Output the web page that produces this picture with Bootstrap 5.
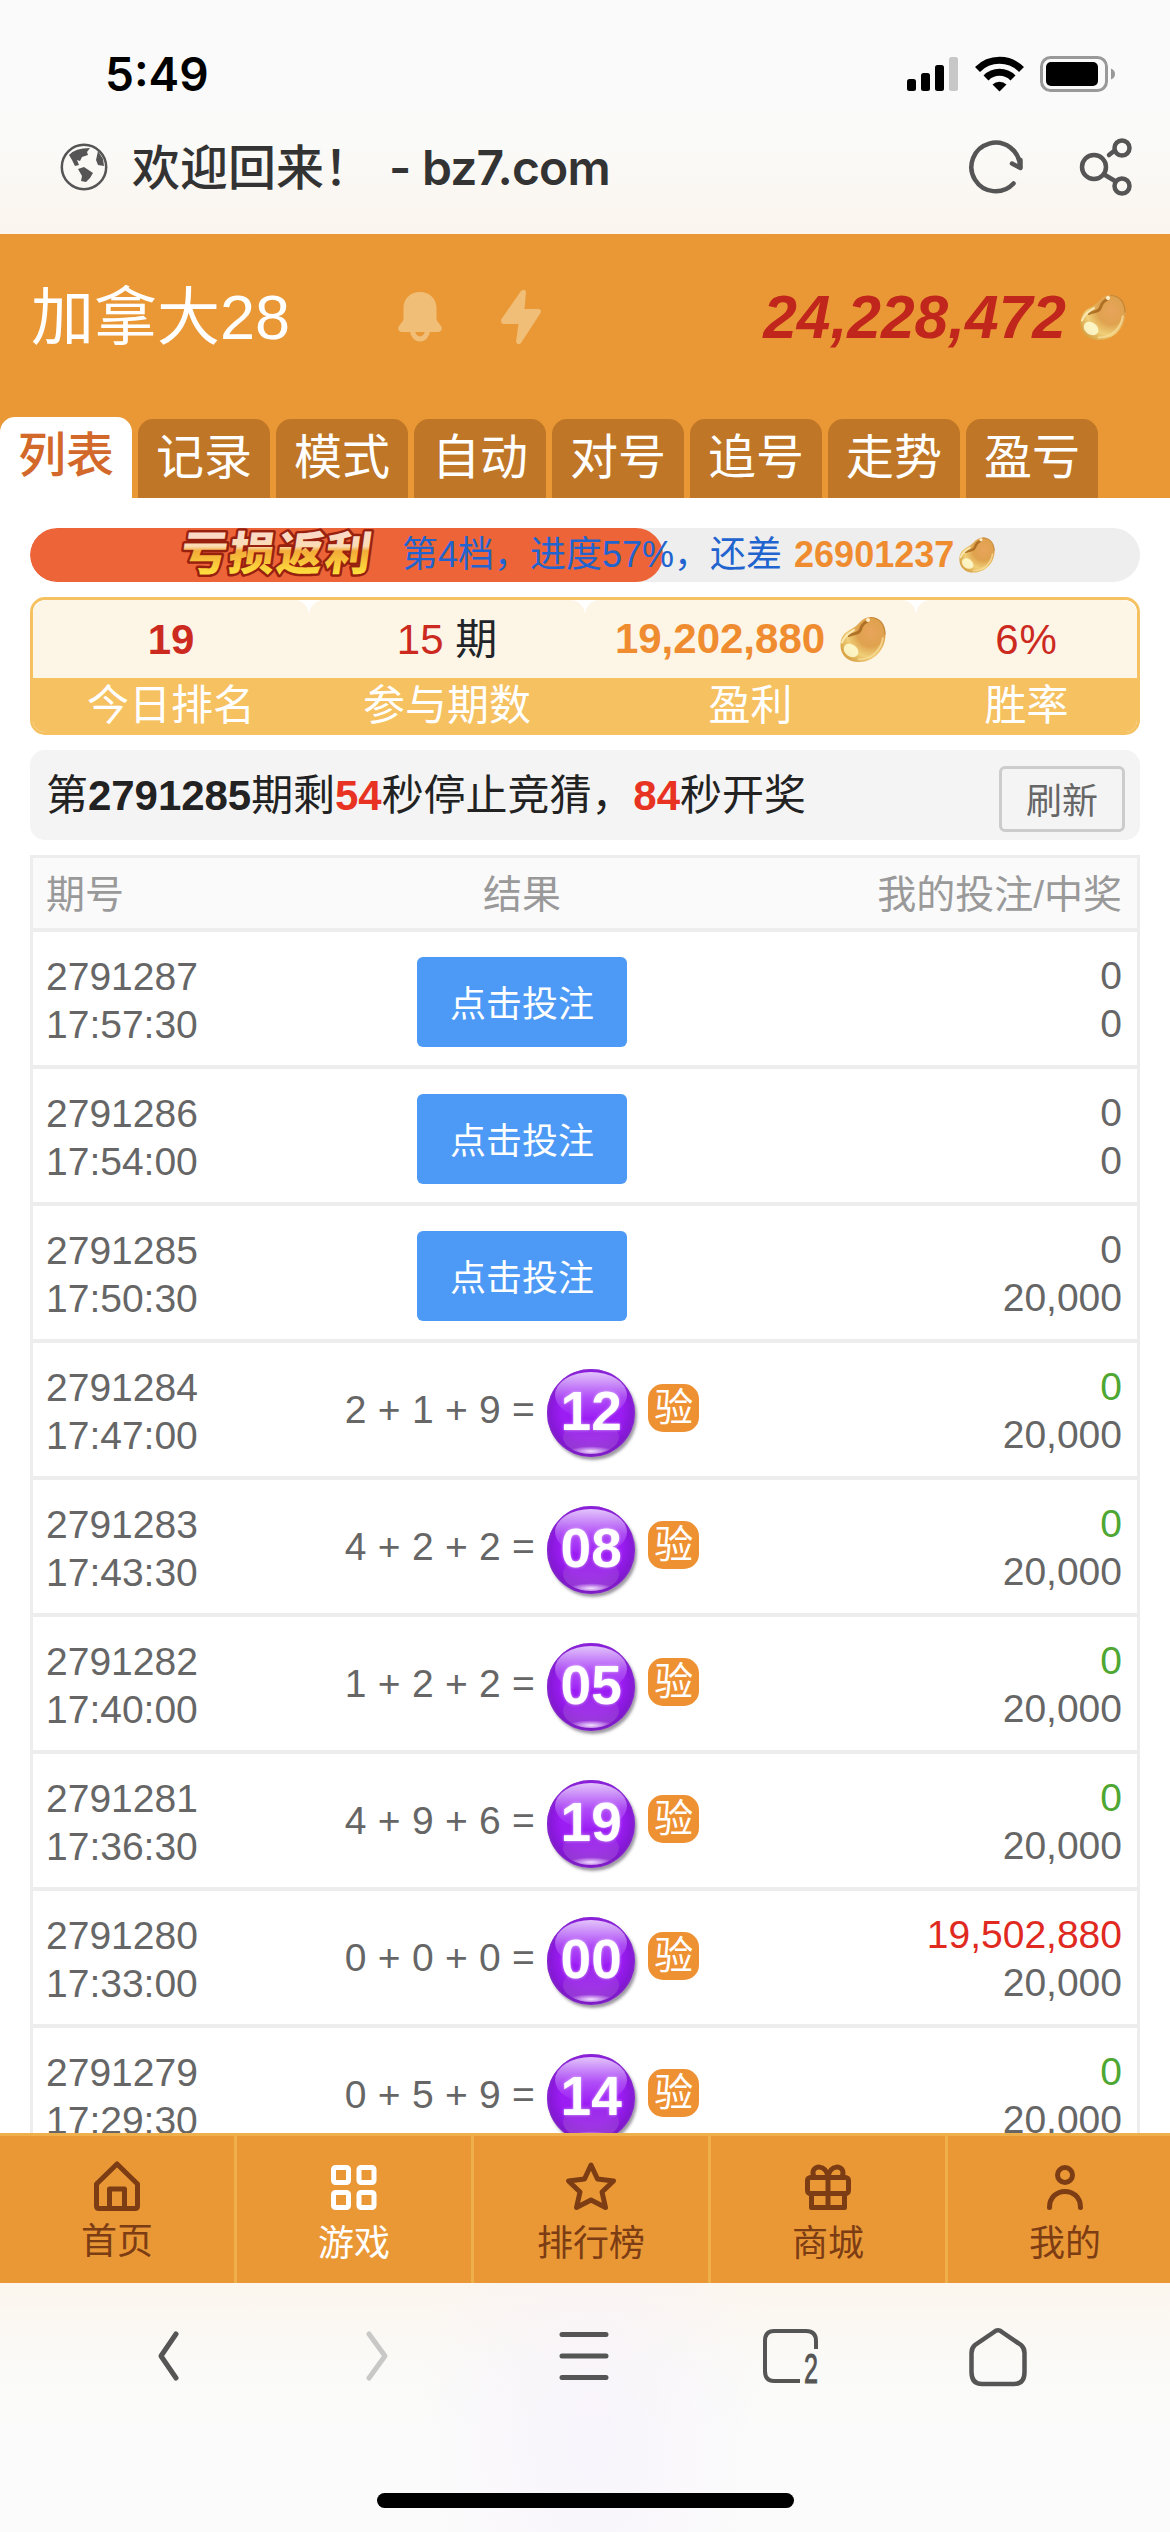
<!DOCTYPE html>
<html lang="zh-CN">
<head>
<meta charset="utf-8">
<meta name="viewport" content="width=device-width, initial-scale=1">
<title>加拿大28</title>
<link href="https://cdn.jsdelivr.net/npm/bootstrap@5.3.0/dist/css/bootstrap.min.css" rel="stylesheet">
<style>
  html, body { height: 2532px; }
  body { width: 1170px; overflow: hidden; background: #fff; color: #222; font-family: "Liberation Sans", "Noto Sans CJK SC", sans-serif; font-size: 39px; line-height: 48px; }
  svg { display: block; flex: none; }
  .ui-font { font-family: Inter, "Noto Sans CJK SC", sans-serif; }
  .browser-top { height: 234px; background: linear-gradient(#fafafa 0 45%, #fafaf8 62%, #fbf5ee); }
  .status-bar { height: 100px; padding: 48px 54px 0 105px; }
  .clock { font-size: 46px; font-weight: 600; line-height: 52px; color: #000; }
  .status-icons { gap: 16px; height: 51px; }
  .address { height: 134px; padding: 0 37px 0 60px; color: #333; }
  .address-title { font-size: 48px; font-weight: 500; white-space: pre; line-height: 60px; margin-left: 24px; padding-top: 2px; }
  .address-host { font-weight: 600; letter-spacing: -.8px; margin-left: -7px; }
  .site-head { height: 264px; background: #ea9835; }
  .head-line { height: 183px; padding: 0 44px 17px 31px; }
  .game-title { font-size: 63px; line-height: 70px; color: #fff; width: 367px; }
  .balance { font-size: 60.5px; line-height: 70px; font-weight: 700; font-style: italic; color: #c0261b; }
  .tabs { gap: 6px; height: 81px; }
  .tab-item { width: 132px; height: 79px; border-radius: 15px 15px 0 0; background: #bf7727; color: #fff; font-size: 48px; line-height: 77px; text-align: center; flex: none; }
  .tab-item.active { height: 81px; background: #fff; color: #d2692a; font-weight: 500; }
  .page-main { padding: 30px 30px 0; height: 1635px; overflow: hidden; }
  .rebate { height: 54px; border-radius: 27px; background: #eee; position: relative; overflow: hidden; }
  .rebate-fill { height: 54px; border-radius: 27px; background: #ec6438; }
  .rebate-text { position: absolute; inset: 0; font-size: 36px; line-height: 56px; color: #2264cf; padding-left: 144px; }
  .rebate-text b { color: #f08c30; margin: 0 5px 0 12px; }
  .stat-box { margin-top: 15px; height: 138px; border: 3px solid #f6c161; border-radius: 15px; font-size: 42px; overflow: hidden; }
  .stat-cell { flex: none; }
  .stat-num { height: 78px; line-height: 80px; background: #fdf5e6; border-radius: 15px 15px 0 0; color: #cc2a1f; }
  .stat-name { height: 54px; line-height: 55px; background: #f6c161; color: #fff; text-align: center; }
  .rate { letter-spacing: 1px; }
  .notice { margin-top: 15px; height: 90px; border-radius: 15px; background: #f4f4f4; font-size: 42px; padding: 0 15px 0 16px; line-height: 90px; letter-spacing: -.05px; }
  .notice-text { padding-top: 2px; }
  .notice i { color: #e83323; font-weight: 700; font-style: normal; }
  .refresh { width: 126px; height: 66px; border: 3px solid #ccc; border-radius: 6px; font-size: 36px; line-height: 66px; color: #666; text-align: center; margin-top: 8px; background: none; padding: 0; }
  .draws { margin-top: 15px; border: 3px solid #ededed; color: #666; }
  .draw-head { height: 74px; border-bottom: 4px solid #ededed; background: #fafafa; color: #999; line-height: 73px; }
  .draw-row { height: 137px; border-bottom: 4px solid #ededed; padding-top: 19px; }
  .c-issue { width: 300px; padding-left: 13px; }
  .c-result { width: 378px; }
  .c-bet { width: 426px; padding-right: 15px; text-align: right; }
  .draw-row .c-issue { padding-top: 2px; }
  .draw-row .c-bet { padding-top: 1px; }
  .btn-bet { width: 210px; height: 90px; margin-top: 6px; border-radius: 6px; background: #4c9af6; color: #fff; font-size: 36px; line-height: 84px; padding: 6px 0 0; border: 0; }
  .result-line { padding-top: 6px; }
  .sum-text { white-space: pre; margin-top: 18px; letter-spacing: .25px; }
  .ball { width: 88px; height: 88px; margin: 1px 13px 0 1px; border-radius: 50%; color: #fff; font-size: 55px; font-weight: 700; line-height: 85px; text-align: center; position: relative; z-index: 0; background: radial-gradient(circle at 50% 46%, #9c1cf4 0 46%, #8418d4 66%, #7412b8 72%); box-shadow: inset 0 0 3px 1px #8a2fd0, 2px 3px 3px rgba(60,50,70,.5); text-shadow: 0 0 3px rgba(255,255,255,.6); }
  .ball::before { content: ""; position: absolute; z-index: -1; left: 8px; top: 3px; width: 72px; height: 46px; border-radius: 50%; background: linear-gradient(#e2c4fb, rgba(190,110,250,.6) 55%, rgba(165,50,248,.1)); }
  .ball::after { content: ""; position: absolute; z-index: -1; left: 16px; bottom: 3px; width: 56px; height: 34px; border-radius: 50%; background: radial-gradient(ellipse 22px 5px at 50% 92%, #f3e0ff, rgba(243,224,255,0)), linear-gradient(rgba(165,85,215,.2), rgba(165,85,215,.6)); }
  .verify { width: 51px; height: 48px; border-radius: 15px; background: #ee9133; color: #fff; line-height: 48px; text-align: center; margin-top: 16px; }
  .win-zero { color: #4ea733; }
  .win-big { color: #e0291f; }
  .game-nav { height: 150px; background: #ea9835; border-top: 3px solid #efaf4a; overflow: hidden; }
  .nav-cell { width: 237px; flex: none; border-right: 3px solid #efb04c; color: #7d3d14; font-size: 36px; line-height: 44px; text-align: center; padding-top: 23px; }
  .nav-cell.active { color: #fff; }
  .nav-cell:last-child { width: 234px; border: 0; }
  .nav-cell svg { margin: 0 auto 9px; }
  .nav-cell:first-child svg { margin-bottom: 7px; }
  .browser-bottom { height: 249px; background: radial-gradient(ellipse 170px 330px at 590px 150px, rgba(247,240,252,.6), rgba(250,246,253,0)), linear-gradient(#fcf6ee, #fafaf8 35%, #fbfbfb 60%); }
  .tool-row { height: 210px; padding: 41px 142px 0 140px; }
  .home-bar { width: 417px; height: 15px; border-radius: 8px; background: #000; }
</style>
</head>
<body class="d-flex flex-column">

<svg width="0" height="0" class="position-absolute">
  <defs>
    <radialGradient id="beanFill" cx=".68" cy=".35" r=".75">
      <stop offset="0" stop-color="#e8a45c"/><stop offset=".4" stop-color="#dfa24e"/><stop offset=".72" stop-color="#f0cf78"/><stop offset="1" stop-color="#d9a548"/>
    </radialGradient>
    <linearGradient id="goldText" x1="0" y1="0" x2="0" y2="1">
      <stop offset=".15" stop-color="#fad9d2"/><stop offset=".45" stop-color="#fbdcb4"/><stop offset=".52" stop-color="#f3ab38"/><stop offset=".9" stop-color="#ffe53e"/>
    </linearGradient>
    <symbol id="bean" viewBox="0 0 46 46">
      <path d="M31 .5C40 1 45.500 8 45.500 18C45.500 33 34 45.500 19 45.500C7 45.500 .5 38 .5 29C.5 21 4 16.500 9.500 13.500C15 10.500 17 9 20 5.500C23 2 27 .5 31 .5Z" fill="url(#beanFill)"/>
      <path d="M9 19C14 16.500 19 18 20.500 13C21.500 9.500 24 6.500 27 5" fill="none" stroke="#a2641c" stroke-width="3" stroke-linecap="round" opacity=".8"/>
      <path d="M2 26C4 19 10 16.500 14 13.500" fill="none" stroke="#fbe9b4" stroke-width="2" stroke-linecap="round"/>
      <ellipse cx="11" cy="34" rx="8" ry="6" fill="#fffbd2" opacity=".85" transform="rotate(35 11 34)"/>
      <path d="M18 43C32 43 41 34 43 21" fill="none" stroke="#f8dc98" stroke-width="2" opacity=".8"/>
      <path d="M30 1C40 1 45 8 45 18" fill="none" stroke="#b9772e" stroke-width="1.200" opacity=".7"/>
      <circle cx="28" cy="3.500" r="2" fill="#fff0cd"/>
    </symbol>
  </defs>
</svg>

<header class="browser-top ui-font">
  <div class="status-bar d-flex justify-content-between">
    <div class="clock">5:49</div>
    <div class="status-icons d-flex align-items-center">
      <svg width="52" height="36" viewBox="0 0 52 36"><rect x="0" y="23" width="9" height="12" rx="2.500"/><rect x="14" y="17" width="9" height="18" rx="2.500"/><rect x="28" y="9" width="9" height="26" rx="2.500"/><rect x="42" y="1" width="9" height="34" rx="2.500" fill="#c7c7c7"/></svg>
      <svg width="49" height="36" viewBox="0 0 49 36"><path d="M2.500 13.500A31 31 0 0 1 46.500 13.500" fill="none" stroke="#000" stroke-width="7"/><path d="M11 22A19 19 0 0 1 38 22" fill="none" stroke="#000" stroke-width="7"/><path d="M17.500 28.500A10 10 0 0 1 31.500 28.500L24.500 35.500Z"/></svg>
      <svg width="76" height="36" viewBox="0 0 76 36"><rect x="1.500" y="1.500" width="65" height="33" rx="9" fill="none" stroke="#999" stroke-width="3"/><rect x="6" y="6" width="52" height="24" rx="5"/><path d="M71 12.500Q75 14 75 18T71 23.500Z" fill="#999"/></svg>
    </div>
  </div>
  <div class="address d-flex align-items-center">
    <svg width="48" height="48" viewBox="0 0 48 48"><circle cx="24" cy="24" r="22.200" fill="none" stroke="#555" stroke-width="2.500"/><path d="M9 12Q15 5 30 5L27 9L28 12L22 14L20 18L17 17L19 22L15 23L12 17ZM38 8L43 16L44 23L38 22L36 17ZM18 26L24 24L33 30L30 35L26 39L21 38L22 33Z" fill="#555"/></svg>
    <div class="address-title">欢迎回来！ <span class="address-host"> - bz7.com</span></div>
    <svg class="ms-auto" width="54" height="54" viewBox="0 0 54 54"><path d="M44.500 43.500A24.300 24.300 0 1 1 51 27" fill="none" stroke="#555" stroke-width="4.500" stroke-linecap="round"/><path d="M43 23.500L51.500 28V20" fill="none" stroke="#555" stroke-width="4.500" stroke-linecap="round" stroke-linejoin="round"/></svg>
    <svg style="margin-left:56px" width="54" height="58" viewBox="0 0 54 58"><g fill="none" stroke="#555" stroke-width="4.500" stroke-linecap="round"><circle cx="15" cy="29" r="12"/><circle cx="43" cy="10" r="7.500"/><circle cx="43" cy="48" r="7.500"/><path d="M30 17L35 13M26 37L36 43"/></g></svg>
  </div>
</header>

<section class="site-head">
  <div class="head-line d-flex align-items-center">
    <div class="game-title">加拿大28</div>
    <svg width="44" height="52" viewBox="0 0 44 52"><path d="M22 1C12 1 5.500 8 5.500 17V29L1 35C-1 38 1 41 4 41H40C43 41 45 38 43 35L38.500 29V17C38.500 8 32 1 22 1Z" fill="#f1be78"/><path d="M14.500 39A7.500 9 0 0 0 29.500 39" fill="none" stroke="#f1be78" stroke-width="5"/></svg>
    <svg style="margin-left:59px" width="40" height="56" viewBox="0 0 40 56"><path d="M20 2Q24-1 25 3L23.500 20H38Q41 21 39.500 24L20 54Q17 57 15 53L17.500 35H2Q-1 34 .5 30Z" fill="#f1be78"/></svg>
    <div class="balance ms-auto">24,228,472</div>
    <svg style="margin-left:14px" width="46" height="47"><use href="#bean"/></svg>
  </div>
  <nav class="tabs d-flex align-items-end">
    <div class="tab-item active">列表</div><div class="tab-item">记录</div><div class="tab-item">模式</div><div class="tab-item">自动</div><div class="tab-item">对号</div><div class="tab-item">追号</div><div class="tab-item">走势</div><div class="tab-item">盈亏</div>
  </nav>
</section>

<main class="page-main flex-shrink-0">
  <div class="rebate">
    <div class="rebate-fill" style="width:57%"></div>
    <div class="rebate-text d-flex align-items-center">
      <svg width="204" height="54" viewBox="0 0 204 54"><text transform="translate(5 42) skewX(-8)" textLength="190" font-family="Noto Sans CJK SC, sans-serif" font-weight="900" font-size="46" fill="url(#goldText)" stroke="#98200f" stroke-width="5" paint-order="stroke" stroke-linejoin="round">亏损返利</text></svg>
      <span class="ms-4">第4档，进度57%，还差</span><b>26901237</b>
      <svg width="36" height="38"><use href="#bean"/></svg>
    </div>
  </div>

  <div class="stat-box d-flex">
    <div class="stat-cell" style="width:276px"><div class="stat-num text-center fw-bold">19</div><div class="stat-name">今日排名</div></div>
    <div class="stat-cell" style="width:276px"><div class="stat-num text-center">15 <span class="text-body">期</span></div><div class="stat-name">参与期数</div></div>
    <div class="stat-cell" style="width:331px"><div class="stat-num d-flex align-items-center justify-content-center fw-bold" style="color:#f08c30">19,202,880<svg style="margin-left:15px" width="46" height="47"><use href="#bean"/></svg></div><div class="stat-name">盈利</div></div>
    <div class="stat-cell" style="width:221px"><div class="stat-num text-center rate">6%</div><div class="stat-name">胜率</div></div>
  </div>

  <div class="notice d-flex justify-content-between align-items-center">
    <div class="notice-text">第<b>2791285</b>期剩<i>54</i>秒停止竞猜，<i>84</i>秒开奖</div>
    <button class="refresh">刷新</button>
  </div>

  <div class="draws">
    <div class="draw-head d-flex"><div class="c-issue">期号</div><div class="c-result text-center">结果</div><div class="c-bet">我的投注/中奖</div></div>
    <div class="draw-row d-flex"><div class="c-issue">2791287<br>17:57:30</div><div class="c-result text-center"><button class="btn-bet">点击投注</button></div><div class="c-bet">0<br>0</div></div>
    <div class="draw-row d-flex"><div class="c-issue">2791286<br>17:54:00</div><div class="c-result text-center"><button class="btn-bet">点击投注</button></div><div class="c-bet">0<br>0</div></div>
    <div class="draw-row d-flex"><div class="c-issue">2791285<br>17:50:30</div><div class="c-result text-center"><button class="btn-bet">点击投注</button></div><div class="c-bet">0<br>20,000</div></div>
    <div class="draw-row d-flex"><div class="c-issue">2791284<br>17:47:00</div><div class="c-result result-line d-flex justify-content-center"><div class="sum-text">2 + 1 + 9 = </div><div class="ball">12</div><div class="verify">验</div></div><div class="c-bet"><span class="win-zero">0</span><br>20,000</div></div>
    <div class="draw-row d-flex"><div class="c-issue">2791283<br>17:43:30</div><div class="c-result result-line d-flex justify-content-center"><div class="sum-text">4 + 2 + 2 = </div><div class="ball">08</div><div class="verify">验</div></div><div class="c-bet"><span class="win-zero">0</span><br>20,000</div></div>
    <div class="draw-row d-flex"><div class="c-issue">2791282<br>17:40:00</div><div class="c-result result-line d-flex justify-content-center"><div class="sum-text">1 + 2 + 2 = </div><div class="ball">05</div><div class="verify">验</div></div><div class="c-bet"><span class="win-zero">0</span><br>20,000</div></div>
    <div class="draw-row d-flex"><div class="c-issue">2791281<br>17:36:30</div><div class="c-result result-line d-flex justify-content-center"><div class="sum-text">4 + 9 + 6 = </div><div class="ball">19</div><div class="verify">验</div></div><div class="c-bet"><span class="win-zero">0</span><br>20,000</div></div>
    <div class="draw-row d-flex"><div class="c-issue">2791280<br>17:33:00</div><div class="c-result result-line d-flex justify-content-center"><div class="sum-text">0 + 0 + 0 = </div><div class="ball">00</div><div class="verify">验</div></div><div class="c-bet"><span class="win-big">19,502,880</span><br>20,000</div></div>
    <div class="draw-row d-flex"><div class="c-issue">2791279<br>17:29:30</div><div class="c-result result-line d-flex justify-content-center"><div class="sum-text">0 + 5 + 9 = </div><div class="ball">14</div><div class="verify">验</div></div><div class="c-bet"><span class="win-zero">0</span><br>20,000</div></div>
  </div>
</main>

<nav class="game-nav d-flex flex-shrink-0">
  <div class="nav-cell"><svg width="54" height="54" viewBox="0 0 54 54"><g fill="none" stroke="currentColor" stroke-width="5" stroke-linejoin="round"><path d="M6.500 25L27 5L47.500 25V47Q47.500 49.500 45 49.500H9Q6.500 49.500 6.500 47Z"/><path d="M19.500 49V30H34.500V49"/></g></svg>首页</div>
  <div class="nav-cell active"><svg width="54" height="54" viewBox="0 0 54 54"><g fill="none" stroke="currentColor" stroke-width="5"><rect x="6.500" y="8.500" width="15" height="15" rx="2"/><rect x="32" y="8.500" width="15" height="15" rx="2"/><rect x="6.500" y="33.500" width="15" height="15" rx="2"/><rect x="32" y="33.500" width="15" height="15" rx="2"/></g></svg>游戏</div>
  <div class="nav-cell"><svg width="54" height="54" viewBox="0 0 54 54"><path d="M27 6L33.500 20L49.500 22L38 33L41.500 48.500L27 41L12.500 48.500L16 33L4.500 22L20.500 20Z" fill="none" stroke="currentColor" stroke-width="5" stroke-linejoin="round"/></svg>排行榜</div>
  <div class="nav-cell"><svg width="54" height="54" viewBox="0 0 54 54"><g fill="none" stroke="currentColor" stroke-width="5" stroke-linejoin="round"><rect x="6.500" y="18.500" width="41" height="16" rx="3"/><path d="M10.500 35V48.500H43.500V35M27 18V48M27 18C25 5 12 6 12 14Q12 17 14 18M27 18C29 5 42 6 42 14Q42 17 40 18"/></g></svg>商城</div>
  <div class="nav-cell"><svg width="54" height="54" viewBox="0 0 54 54"><g fill="none" stroke="currentColor" stroke-width="5" stroke-linecap="round"><circle cx="27" cy="16" r="7.500"/><path d="M11.500 48.500C11.500 27 42.500 27 42.500 48.500"/></g></svg>我的</div>
</nav>

<footer class="browser-bottom flex-shrink-0">
  <div class="tool-row d-flex justify-content-between">
    <svg width="60" height="64" viewBox="0 0 60 64"><path d="M36 10L21 32L36 54" fill="none" stroke="#555" stroke-width="5" stroke-linecap="round" stroke-linejoin="round"/></svg>
    <svg width="60" height="64" viewBox="0 0 60 64"><path d="M22 10L38 32L22 54" fill="none" stroke="#c8c8c6" stroke-width="5" stroke-linecap="round" stroke-linejoin="round"/></svg>
    <svg width="60" height="64" viewBox="0 0 60 64"><path d="M8 10.500H52M8 32H52M8 53.500H52" fill="none" stroke="#555" stroke-width="5" stroke-linecap="round"/></svg>
    <svg width="60" height="64" viewBox="0 0 60 64"><path d="M55 25V17Q55 7 45 7H13Q4 7 4 17V47Q4 57 13 57H39" fill="none" stroke="#555" stroke-width="4"/><text x="43" y="59" font-family="Liberation Sans, sans-serif" font-size="42" fill="#555" stroke="#555" textLength="14" lengthAdjust="spacingAndGlyphs">2</text></svg>
    <svg width="60" height="64" viewBox="0 0 60 64"><path d="M26 8Q30 4.500 34 8L53 21Q56.500 24 56.500 29V48Q56.500 60 46 60H14Q3.500 60 3.500 48V29Q3.500 24 7 21Z" fill="none" stroke="#555" stroke-width="4.500"/></svg>
  </div>
  <div class="home-bar mx-auto"></div>
</footer>

<script src="https://cdn.jsdelivr.net/npm/bootstrap@5.3.0/dist/js/bootstrap.bundle.min.js"></script>
</body>
</html>
